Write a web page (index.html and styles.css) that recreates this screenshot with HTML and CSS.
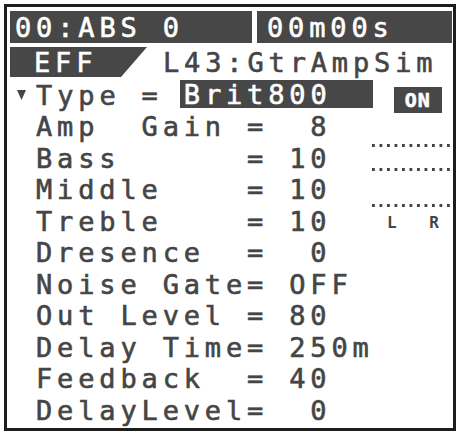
FILE: index.html
```html
<!DOCTYPE html>
<html lang="en">
<head>
<meta charset="utf-8">
<title>Effect Edit</title>
<link rel="stylesheet" href="styles.css">
</head>
<body>
<div class="lcd">
  <div class="head">
    <span class="bar bar-a">00:ABS 0</span>
    <span class="bar bar-b">00m00s</span>
  </div>
  <div class="eff">
    <span class="tab">EFF</span>
    <span class="name">L43:GtrAmpSim</span>
  </div>
  <div class="type">
    <span class="caret"><svg width="9" height="10" viewBox="0 0 9 10"><polygon points="0,0 9,0 4.5,10" fill="#454545"/></svg></span>
    <span class="txt">Type = </span>
    <span class="sel">Brit800</span>
    <span class="on">ON</span>
  </div>
  <div class="params">
    <div class="list">
      <div class="line">Amp  Gain =  8</div>
      <div class="line">Bass      = 10</div>
      <div class="line">Middle    = 10</div>
      <div class="line">Treble    = 10</div>
      <div class="line">Dresence  =  0</div>
      <div class="line">Noise Gate= OFF</div>
      <div class="line">Out Level = 80</div>
      <div class="line">Delay Time= 250m</div>
      <div class="line">Feedback  = 40</div>
      <div class="line">DelayLevel=  0</div>
    </div>
    <div class="meter">
      <div class="dots d1"></div>
      <div class="dots d2"></div>
      <div class="dots d3"></div>
      <div class="lr"><span>L</span><span>R</span></div>
    </div>
  </div>
</div>
</body>
</html>
```
FILE: styles.css
```css
* { box-sizing: border-box; }
html, body { margin: 0; background: #fff; }
body {
  width: 459px;
  height: 434px;
  overflow: hidden;
  font-family: "DejaVu Sans Mono", monospace;
  color: #454545;
}

/* screen frame */
.lcd {
  margin: 4px 0 0 4px;
  width: 452px;
  height: 427px;
  border: 3px solid #1c1c1c;
  padding: 4px 0 0 3px;
}

/* 21-column character grid, 21.1px per cell */
.head, .eff, .type, .line, .bar, .tab, .name, .txt, .sel {
  font-size: 27px;
  font-weight: normal;
  letter-spacing: 4.85px;
  white-space: pre;
  -webkit-text-stroke: 0.6px currentColor;
}

/* status line */
.head { display: flex; gap: 5px; height: 32px; }
.bar {
  background: #474747;
  color: #fff;
  height: 32px;
  line-height: 32px;
  padding-top: 1px;
}
.bar-a { width: 242px; padding-left: 5px; }
.bar-b { width: 195px; padding-left: 10px; }

/* effect title */
.eff { display: flex; margin-top: 4px; height: 30px; line-height: 31px; }
.tab {
  width: 137px;
  height: 30px;
  background: #474747;
  color: #fff;
  padding-left: 24px;
  clip-path: polygon(0 0, 137px 0, 111px 100%, 0 100%);
}
.name { margin-left: 16px; }

/* type selector */
.type { display: flex; align-items: flex-start; margin-top: 3px; height: 31px; line-height: 31px; padding-left: 4px; }
.caret { width: 21.1px; padding: 10px 0 0 3px; line-height: 0; -webkit-text-stroke: 0; }
.txt { width: 147.7px; padding-left: 1px; }
.sel {
  width: 193px;
  height: 28px;
  line-height: 29px;
  margin-left: -3px;
  padding-left: 4px;
  background: #474747;
  color: #fff;
}
.on {
  margin: 7px 0 0 21px;
  width: 48px;
  height: 26px;
  background: #474747;
  color: #fff;
  font-size: 20px;
  font-weight: bold;
  line-height: 27px;
  text-align: center;
  letter-spacing: 1px;
}

/* parameter list */
.params { display: flex; padding-left: 4px; }
.list { width: 358px; padding-left: 22px; }
.line { height: 31.5px; line-height: 31.5px; }

/* level meter */
.meter { width: 84px; display: flex; flex-direction: column; }
.dots {
  height: 3px;
  width: 82px;
  background-image: linear-gradient(to right, #454545 3px, transparent 3px);
  background-size: 7.5px 3px;
}
.d1 { margin-top: 33px; }
.d2 { margin-top: 21px; }
.d3 { margin-top: 33px; }
.lr {
  display: flex;
  justify-content: space-between;
  width: 52px;
  margin: 8px 0 0 15px;
  font-size: 16px;
  font-weight: bold;
  line-height: 16px;
}
```
